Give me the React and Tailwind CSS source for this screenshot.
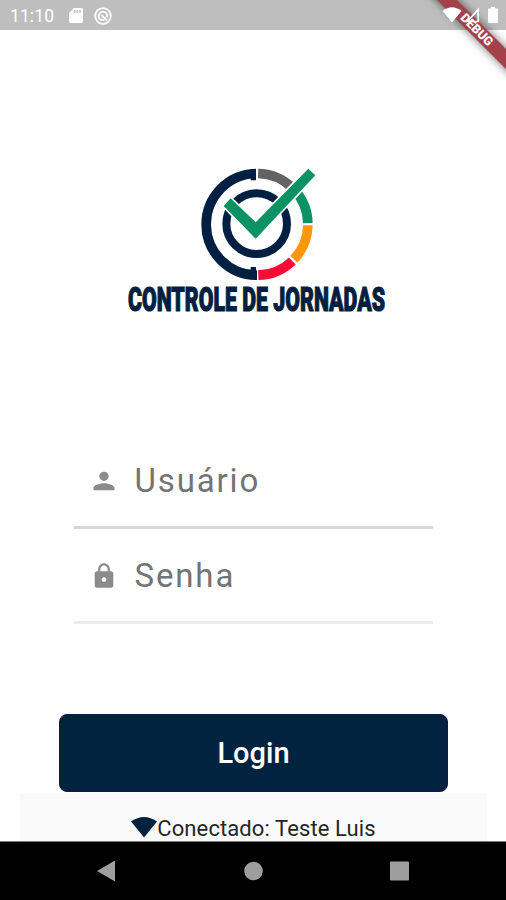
function arc(from, to) {
  const point = (deg) => {
    const a = (deg * Math.PI) / 180;
    return `${201 + 152.5 * Math.sin(a)} ${208 - 152.5 * Math.cos(a)}`;
  };
  return `M${point(from)}A152.5 152.5 0 0 1 ${point(to)}`;
}

function Logo() {
  return (
    <svg className="h-[165px] w-[280px] overflow-visible" viewBox="0 0 280 165" role="img" aria-label="Controle de Jornadas">
      <g transform="translate(74 0) scale(.33333)" fill="none">
        <g strokeWidth="29">
          <path d={arc(180, 358.7)} stroke="#001f42" />
          <path d={arc(1.3, 43)} stroke="#636363" />
          <path d={arc(48, 88.5)} stroke="#0b9263" />
          <path d={arc(91, 133.5)} stroke="#ff960b" />
          <path d={arc(136, 178.5)} stroke="#fc0b35" />
        </g>
        <path d="M182 42h16v34h-16zM182 336h16v37h-16z" fill="#001f42" />
        <circle cx="200" cy="206" r="91" stroke="#001f42" strokeWidth="24" />
        <path d="M101 153L122 130L197 202L355 41L376 61L197 251Z" fill="#0b9263" stroke="#fff" strokeWidth="10" paintOrder="stroke" />
      </g>
      <text x="12" y="156" textLength="257" lengthAdjust="spacingAndGlyphs" fill="#001f42" stroke="#001f42" strokeWidth="1.2" className="font-[Roboto,sans-serif] text-[34px] font-black">
        CONTROLE DE JORNADAS
      </text>
    </svg>
  );
}

function StatusBar() {
  return (
    <header className="flex h-[30px] shrink-0 items-center bg-[#bebebe] pl-[10px] text-white">
      <span className="w-[59px] pt-[2px] text-[17.5px] leading-[28px] tracking-[0.1px]">11:10</span>
      <svg className="mt-[1px] h-[17px] w-[14px]" viewBox="0 0 14 17" fill="currentColor">
        <path fillRule="evenodd" d="M5 1h7.5Q14 1 14 2.5v12q0 1.5-1.5 1.5h-11Q0 16 0 14.500V6zM5 3v3h1.500V3zM7.600 3v3h1.500V3zM10.200 3v3h1.500V3z" />
      </svg>
      <svg className="mt-[1px] ml-[11px] h-[18px] w-[18px]" viewBox="0 0 18 18" fill="none" stroke="currentColor">
        <circle cx="9" cy="9" r="7.800" strokeWidth="1.800" />
        <path d="M5.800 12A4.300 4.300 0 1 1 13 10.500M7.500 8l5.500 5.500M5.800 12q2 1.700 4.500 1" strokeWidth="1.800" />
      </svg>
    </header>
  );
}

function DebugBanner() {
  return (
    <div className="absolute top-0 right-0 h-20 w-[100px] overflow-hidden">
      <div className="absolute top-[20px] left-[7px] h-[14px] w-[122px] rotate-45 bg-[#a24149] text-center text-[12.5px] leading-[14px] font-black text-white shadow-[0_0_10px_rgba(0,0,0,0.6)]">
        <span className="relative left-[4px]">DEBUG</span>
      </div>
      <svg className="absolute top-0 left-0 h-[30px] w-[100px]" viewBox="0 0 100 30" fill="#fff">
        <path d="M36.500 11Q46 3.500 55.500 11L46 22.500Z" />
        <path d="M72.200 9.500V21.500H61.500z" fill="none" stroke="#fff" strokeWidth="1.700" />
        <path d="M82.500 8.500h2V7h4v1.500h2q1 0 1 1v12.500q0 1-1 1h-8q-1 0-1-1V9.500q0-1 1-1z" transform="translate(.5 0)" />
      </svg>
    </div>
  );
}

function Field({ label, icon, line }) {
  return (
    <div className={`flex items-center pl-[16px] ${line}`}>
      <svg className="h-[28px] w-[28px]" viewBox="0 0 24 24" fill="#8b8b8b">
        <path d={icon} />
      </svg>
      <span className="ml-[17px] text-[33px] leading-[40px] tracking-[1.85px] text-[#747474]">{label}</span>
    </div>
  );
}

export default function App() {
  return (
    <div className="relative flex h-[900px] w-[506px] flex-col overflow-hidden bg-white font-[Roboto,sans-serif]">
      <StatusBar />
      <main className="flex h-[811px] shrink-0 flex-col items-center">
        <div className="mt-[125px] mr-[-6px]">
          <Logo />
        </div>
        <div className="mt-[118px] w-[359px]">
          <Field
            label="Usuário"
            icon="M12 12c2.210 0 4-1.790 4-4s-1.790-4-4-4-4 1.790-4 4 1.790 4 4 4zm0 2c-3.330 0-9 1.340-9 4v2h18v-2c0-2.660-6.330-4-9-4z"
            line="h-[91px] border-b-[3px] border-[#d6d6d6] pb-[3px]"
          />
          <Field
            label="Senha"
            icon="M18 8h-1V6c0-2.760-2.240-5-5-5S7 3.240 7 6v2H6c-1.100 0-2 .9-2 2v10c0 1.100.9 2 2 2h12c1.100 0 2-.9 2-2V10c0-1.100-.9-2-2-2zm-6 9c-1.100 0-2-.9-2-2s.9-2 2-2 2 .9 2 2-.9 2-2 2zm3.100-9H8.900V6c0-1.710 1.390-3.100 3.100-3.100s3.100 1.390 3.100 3.100v2z"
            line="h-[95px] border-b-[3px] border-[#ececec] pt-[2px]"
          />
        </div>
        <button className="mt-[90px] ml-[1px] h-[78px] w-[389px] shrink-0 rounded-[8px] border border-[#19164a] bg-[#012340] pt-[2px] text-[29px] font-medium text-white">
          Login
        </button>
        <div className="mt-px flex h-[48px] w-[467px] shrink-0 items-start justify-center bg-[#fafafa] pt-[23px] pl-[1px] text-[22px] leading-[26px] tracking-[0.1px] text-[#262626]">
          <svg className="mt-[1px] h-[21px] w-[26px]" viewBox="0 0 26 21" fill="#012340">
            <path d="M0 4.500Q13-4.500 26 4.500L13 20.500Z" />
          </svg>
          <span>Conectado: Teste Luis</span>
        </div>
      </main>
      <nav className="flex h-[59px] shrink-0 items-center border-t border-[#777] bg-black pl-[97px]">
        <svg className="h-[22px] w-[314px]" viewBox="0 0 314 22" fill="#9e9e9e">
          <path d="M0 11L18 .5v21z" />
          <circle cx="156.500" cy="11" r="9.300" />
          <rect x="293" y="1.500" width="19" height="19" rx="1" />
        </svg>
      </nav>
      <DebugBanner />
    </div>
  );
}
